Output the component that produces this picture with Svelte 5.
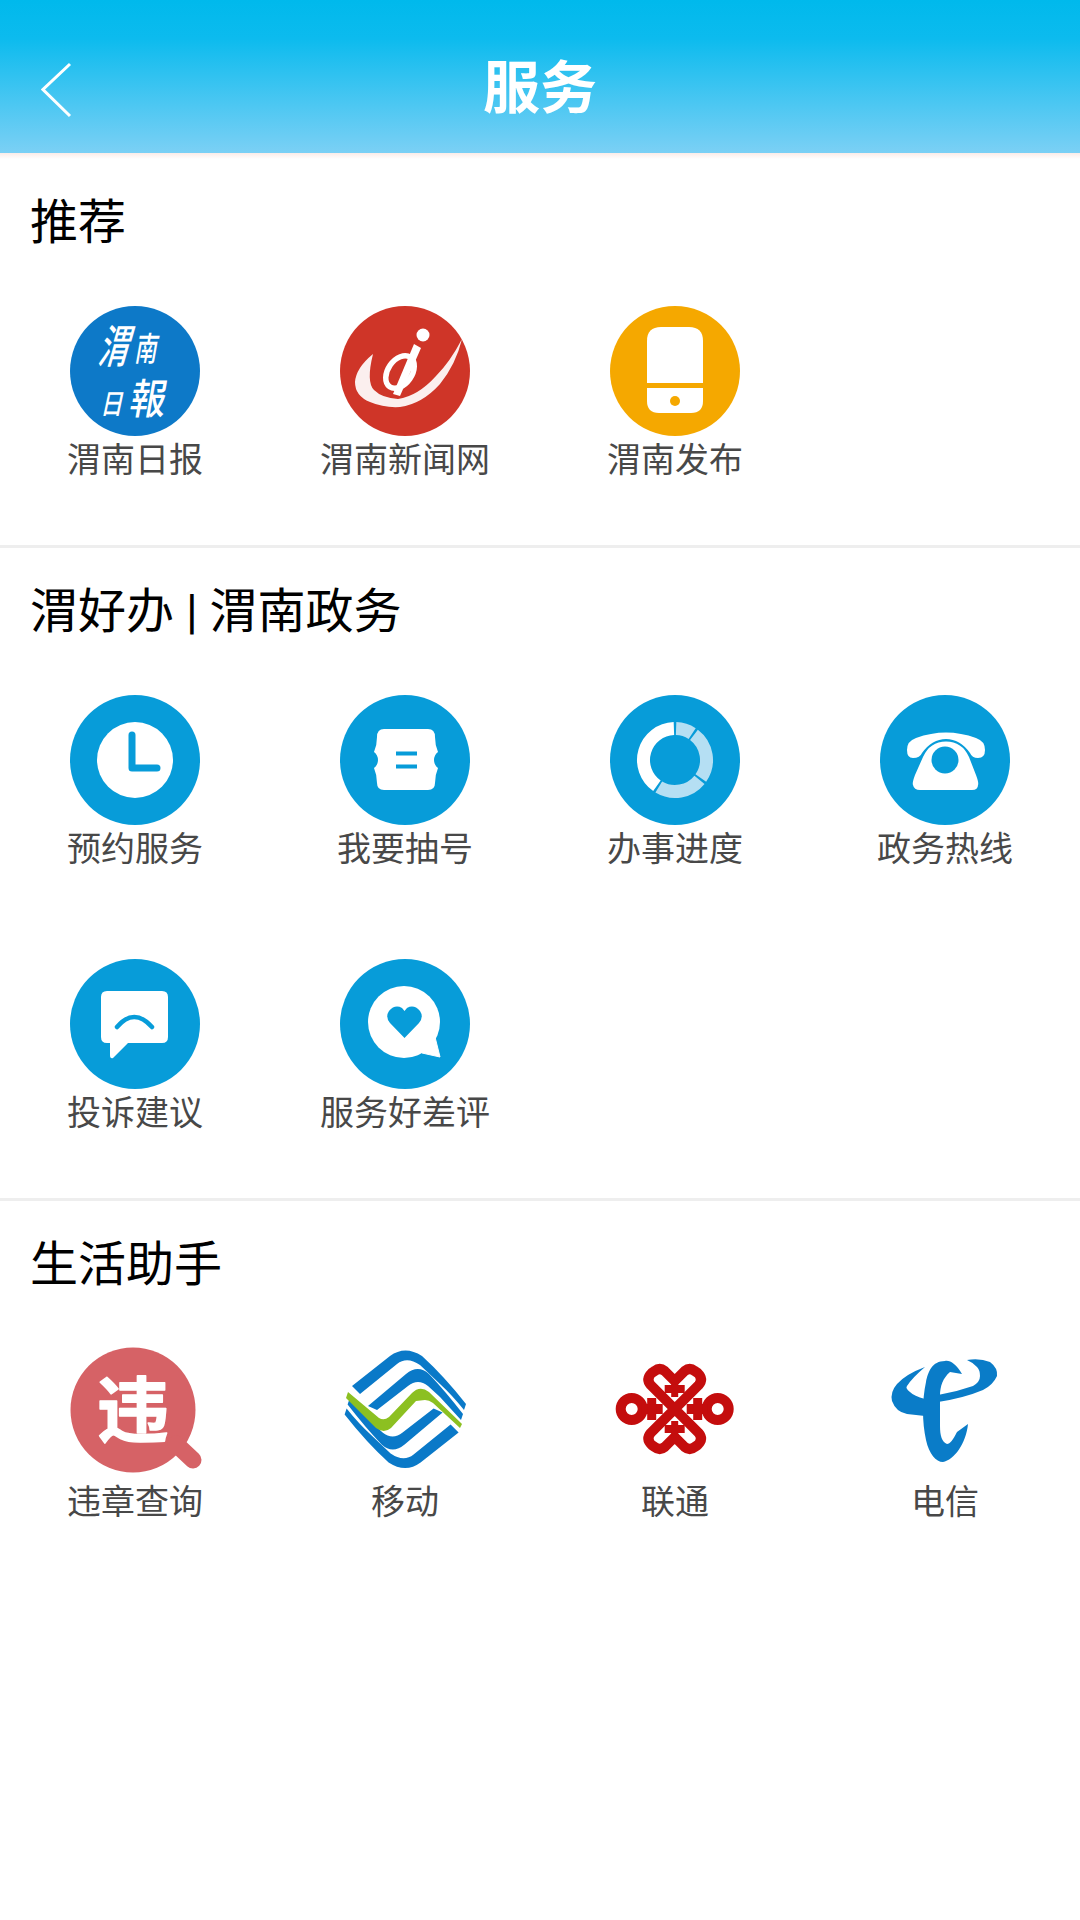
<script>
  const sections = [
    {
      title: '推荐',
      items: [
        { label: '渭南日报', icon: 'daily' },
        { label: '渭南新闻网', icon: 'news' },
        { label: '渭南发布', icon: 'phone' }
      ]
    },
    {
      title: '渭好办 | 渭南政务',
      items: [
        { label: '预约服务', icon: 'clock' },
        { label: '我要抽号', icon: 'ticket' },
        { label: '办事进度', icon: 'progress' },
        { label: '政务热线', icon: 'hotline' },
        { label: '投诉建议', icon: 'complain' },
        { label: '服务好差评', icon: 'rate' }
      ]
    },
    {
      title: '生活助手',
      items: [
        { label: '违章查询', icon: 'violation' },
        { label: '移动', icon: 'mobile' },
        { label: '联通', icon: 'unicom' },
        { label: '电信', icon: 'telecom' }
      ]
    }
  ]

  // the two blue bands of the mobile logo, drawn again rotated for the lower half
  const bandOuter =
    'M12 38 L50 8 Q65 -3 82 8 Q104 28 126 56 L124 62 Q112 47 100 36 L80 17 Q67 8 57 16 L20 46 Z'
  const bandInner =
    'M28 58 L66 26 Q78 16 89 26 Q106 44 123 66 L121 72 Q110 60 100 49 L88 38 Q78 30 68 38 L37 62 Z'

  // ring segment, angles in degrees clockwise from 12 o'clock
  function arc(from, to) {
    const r = 31.5
    const pt = (a) => {
      const t = (a * Math.PI) / 180
      return `${(65 + r * Math.sin(t)).toFixed(2)} ${(65 - r * Math.cos(t)).toFixed(2)}`
    }
    return `M${pt(from)} A${r} ${r} 0 ${to - from > 180 ? 1 : 0} 1 ${pt(to)}`
  }
</script>

<div class="page">
  <header class="topbar">
    <svg class="back" viewBox="0 0 32 56" width="32" height="56">
      <path d="M29 2 L2 27.5 L29 54" fill="none" stroke="#fff" stroke-width="3" />
    </svg>
    <h1>服务</h1>
  </header>
  <div class="strip"></div>

  {#each sections as section}
    <section>
      <h2>{section.title}</h2>
      <div class="grid">
        {#each section.items as item}
          <div class="item">
            <svg class="icon" viewBox="0 0 130 130" width="130" height="130">
              {#if item.icon === 'daily'}
                <circle cx="65" cy="65" r="65" fill="#0d79c8" />
                <g class="brush" fill="#fff">
                  <text transform="translate(27 57) skewX(-16) scale(0.8 1.2)" font-size="38">渭</text>
                  <text transform="translate(64 55) skewX(-10) scale(0.8 1.2)" font-size="28">南</text>
                  <text transform="translate(30 108) skewX(-12) scale(0.8 1)" font-size="28">日</text>
                  <text transform="translate(58 108) skewX(-10) scale(0.95 1.1)" font-size="38">報</text>
                </g>
              {:else if item.icon === 'news'}
                <circle cx="65" cy="65" r="65" fill="#cf3528" />
                <circle cx="83" cy="29" r="6.5" fill="#fff" />
                <path d="M33 48 Q16 62 15 76 Q15 90 30 96 Q44 102 60 101 Q82 98 100 78 Q116 58 122 33 Q110 56 96 70 Q78 90 58 93 Q42 92 34 84 Q26 76 33 48 Z" fill="#fff" opacity="0.92" />
                <ellipse cx="60" cy="66" rx="12" ry="18" transform="rotate(35 60 66)" fill="none" stroke="#fff" stroke-width="5.5" />
                <path d="M74 38 L81 42 L60 90 L53 88 Z" fill="#fff" />
              {:else if item.icon === 'phone'}
                <circle cx="65" cy="65" r="65" fill="#f5a800" />
                <path d="M37 77 V35 Q37 21 51 21 H79 Q93 21 93 35 V77 Z" fill="#fff" />
                <path d="M37 82 H93 V95 Q93 107 81 107 H49 Q37 107 37 95 Z" fill="#fff" />
                <circle cx="65" cy="95" r="5" fill="#f5a800" />
              {:else if item.icon === 'clock'}
                <circle cx="65" cy="65" r="65" fill="#079cd9" />
                <circle cx="65" cy="65" r="38" fill="#fff" />
                <path d="M62 40 V73 H87" fill="none" stroke="#079cd9" stroke-width="7" stroke-linecap="round" stroke-linejoin="round" />
              {:else if item.icon === 'ticket'}
                <circle cx="65" cy="65" r="65" fill="#079cd9" />
                <path d="M44 34 H88 Q95 34 95 42 Q95 50 98 57 A10 10 0 0 0 98 73 Q95 80 95 88 Q95 95 88 95 H44 Q37 95 37 88 Q37 80 34 73 A10 10 0 0 0 34 57 Q37 50 37 42 Q37 34 44 34 Z" fill="#fff" />
                <path d="M56 58.5 H77 M56 71.5 H77" stroke="#079cd9" stroke-width="4" />
              {:else if item.icon === 'progress'}
                <circle cx="65" cy="65" r="65" fill="#079cd9" />
                <g fill="none" stroke-width="13">
                  <path d={arc(215, 358)} stroke="#fff" />
                  <path d={arc(2, 33)} stroke="#b5dff3" />
                  <path d={arc(37, 125)} stroke="#b5dff3" />
                  <path d={arc(129, 211)} stroke="#b5dff3" />
                </g>
              {:else if item.icon === 'hotline'}
                <circle cx="65" cy="65" r="65" fill="#079cd9" />
                <path d="M27 55 Q27 46 36 43 Q66 32 96 43 Q105 46 105 55 Q105 63 98 63 Q92 63 90 58 Q80 44 66 44 Q52 44 42 58 Q40 63 33 63 Q27 63 27 55 Z" fill="#fff" />
                <path d="M66 46.5 Q50 46.5 43 62 L35 80 Q32 88 33 90 Q34 95 40 95 H92 Q98 95 98 90 Q99 88 96 80 L89 62 Q82 46.5 66 46.5 Z" fill="#fff" />
                <circle cx="65" cy="65" r="13.5" fill="#079cd9" />
              {:else if item.icon === 'complain'}
                <circle cx="65" cy="65" r="65" fill="#079cd9" />
                <path d="M37 32 H92 Q98 32 98 38 V78 Q98 84 92 84 H58 L43 99 Q40 100 40 96 V84 H37 Q31 84 31 78 V38 Q31 32 37 32 Z" fill="#fff" />
                <path d="M47 68 Q64 48 82 68" fill="none" stroke="#079cd9" stroke-width="4.5" stroke-linecap="round" />
              {:else if item.icon === 'rate'}
                <circle cx="65" cy="65" r="65" fill="#079cd9" />
                <circle cx="64" cy="63" r="36" fill="#fff" />
                <path d="M95 78 L100 98 L82 94 Z" fill="#fff" stroke="#fff" stroke-linejoin="round" />
                <path d="M64.5 79 L50 64 Q45 58 49 52 Q55 45 62 49 L64.5 52 L67 49 Q74 45 80 52 Q84 58 79 64 Z" fill="#079cd9" />
              {:else if item.icon === 'violation'}
                <circle cx="63" cy="62" r="62.5" fill="#d66266" />
                <path d="M106 96 L123 112" stroke="#d66266" stroke-width="17" stroke-linecap="round" />
                <text class="vio" x="63" y="88" text-anchor="middle" font-size="72" fill="#fff" stroke="#fff" stroke-width="1.5" stroke-linejoin="round">违</text>
              {:else if item.icon === 'mobile'}
                <g fill="#0a79c8">
                  <path d={bandOuter} />
                  <path d={bandInner} />
                  <g transform="rotate(180 65.3 61.3)">
                    <path d={bandOuter} />
                    <path d={bandInner} />
                  </g>
                </g>
                <path d="M8 44 L39 70 Q44 73 49 69 L72 45 Q80 37 89 44 L122 76 L120 80 L93 55 Q89 52 85 52 L76 53 L51 80 Q44 86 36 80 L6 50 Z" fill="#8cc021" />
              {:else if item.icon === 'unicom'}
                <g transform="translate(64.7 61)" fill="none" stroke="#c40d0d" stroke-width="10" stroke-linejoin="round" stroke-linecap="round">
                  <path d="M-24 -24 Q-29 -30 -23 -36 L-20 -38 Q-15 -42 -10 -38 L0 -28 L10 -38 Q15 -42 20 -38 L23 -36 Q29 -30 24 -24 L-24 24 Q-29 30 -23 36 L-20 38 Q-15 42 -10 38 L0 28 L10 38 Q15 42 20 38 L23 36 Q29 30 24 24 Z" />
                  <circle cx="-43" cy="0" r="11" />
                  <circle cx="43" cy="0" r="11" />
                  <path d="M-33 0 H-12 M33 0 H12" stroke-linecap="butt" />
                  <path d="M-23 -11 V11 M23 -11 V11" stroke-width="9" stroke-linecap="butt" />
                  <path d="M0 -28 V-12 M0 28 V12" stroke-width="7" stroke-linecap="butt" />
                  <path d="M-10 -20 H10 M-10 20 H10" stroke-width="8" stroke-linecap="butt" />
                </g>
              {:else if item.icon === 'telecom'}
                <g fill="#0a7cc8">
                  <path d="M82 26 C76 16 70 12 65 13 C52 13 48 24 46 34 C42 52 42 74 46 92 C49 106 56 114 63 114 C74 112 86 96 88 76 L77 84 C73 92 70 96 67 96 C62 94 60 88 60 78 L60 48 C60 38 63 30 70 24 Z" />
                  <path d="M45 19 Q26 26 17 36 Q10 44 12 53 Q16 64 27 66 L45 68 L45 51 Q34 48 30 44 Q25 40 27 38 Q32 30 45 19 Z" />
                  <path d="M87 12 Q100 10 110 14 Q118 20 117 28 Q113 37 103 42 Q84 50 58 54 L58 47 Q76 44 93 38 Q100 34 100 28 Q100 22 97 19 Q92 14 87 12 Z" />
                </g>
              {/if}
            </svg>
            <span class="label">{item.label}</span>
          </div>
        {/each}
      </div>
    </section>
  {/each}
</div>

<style>
  :global(body) {
    background: #fff;
  }

  .page {
    width: 1080px;
    height: 1920px;
    overflow: hidden;
    background: #fff;
    font-family: "Noto Sans CJK SC", "Noto Sans", sans-serif;
  }

  .topbar {
    position: relative;
    box-sizing: border-box;
    height: 153px;
    padding-top: 14px;
    display: flex;
    align-items: center;
    justify-content: center;
    background: linear-gradient(180deg, #00b9ec 0%, #0cbbee 25%, #7bd0f5 100%);
  }

  .back {
    position: absolute;
    left: 41px;
    top: 62px;
  }

  h1 {
    margin: 0;
    font-size: 57px;
    font-weight: 700;
    line-height: 1;
    color: #fff;
  }

  .strip {
    height: 6px;
    background: linear-gradient(180deg, #fbece8, #fff);
  }

  section {
    padding: 40px 0 65px;
    border-bottom: 3px solid #eeeeee;
  }

  section:last-child {
    border-bottom: none;
  }

  h2 {
    margin: 0 0 0 30px;
    font-family: Roboto, "Noto Sans CJK SC", sans-serif;
    font-size: 48px;
    font-weight: 400;
    line-height: 48px;
    color: #000;
  }

  .grid {
    display: grid;
    grid-template-columns: repeat(4, 270px);
    row-gap: 90px;
    margin-top: 59px;
  }

  .item {
    display: flex;
    flex-direction: column;
    align-items: center;
  }

  .icon {
    display: block;
    overflow: visible;
  }

  .label {
    font-size: 34px;
    line-height: 44px;
    color: #484848;
    white-space: nowrap;
  }

  .brush {
    font-family: "Noto Sans CJK SC", sans-serif;
    font-weight: 500;
  }

  .vio {
    font-family: "Noto Sans CJK SC", sans-serif;
    font-weight: 700;
  }
</style>
